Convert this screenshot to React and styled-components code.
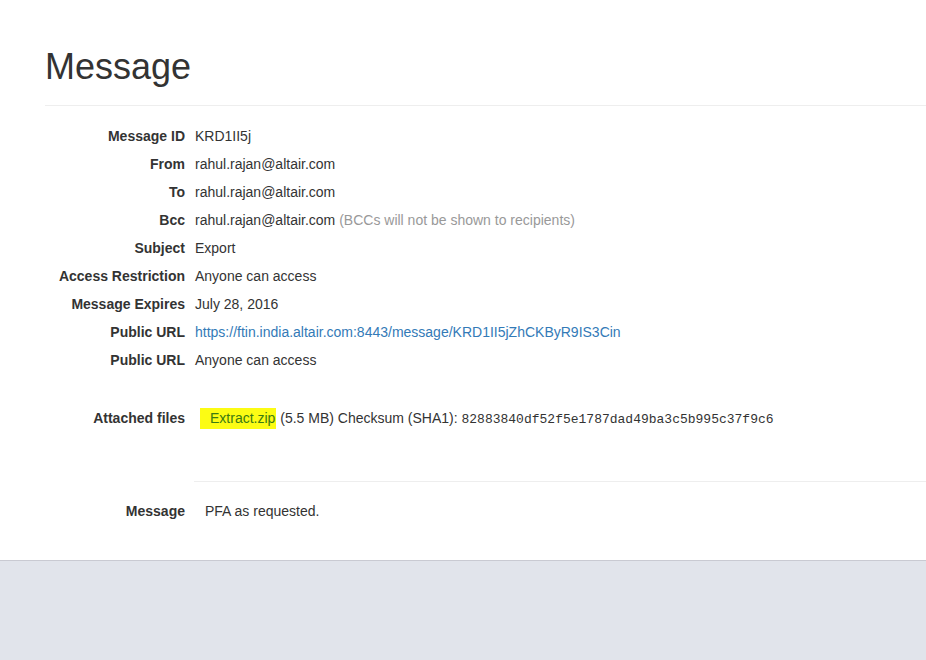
import React from 'react'
import styled, { createGlobalStyle } from 'styled-components'

const GlobalStyle = createGlobalStyle`
  html, body {
    margin: 0;
    padding: 0;
    background: #e1e4eb;
  }
  body {
    font-family: "Liberation Sans", Arial, Helvetica, sans-serif;
    font-size: 14px;
    color: #333;
  }
`

const fields = [
  { label: 'Message ID', value: 'KRD1II5j' },
  { label: 'From', value: 'rahul.rajan@altair.com' },
  { label: 'To', value: 'rahul.rajan@altair.com' },
  { label: 'Bcc', value: 'rahul.rajan@altair.com', note: '(BCCs will not be shown to recipients)' },
  { label: 'Subject', value: 'Export' },
  { label: 'Access Restriction', value: 'Anyone can access' },
  { label: 'Message Expires', value: 'July 28, 2016' },
  { label: 'Public URL', value: 'https://ftin.india.altair.com:8443/message/KRD1II5jZhCKByR9IS3Cin', link: true },
  { label: 'Public URL', value: 'Anyone can access' },
]

function App() {
  return (
    <>
      <GlobalStyle />
      <Page>
        <Header>
          <Title>Message</Title>
        </Header>
        <Details>
          {fields.map((f, i) => (
            <Row key={i}>
              <Label>{f.label}</Label>
              <Value>
                {f.link ? <Link href="#">{f.value}</Link> : f.value}
                {f.note && <Note> {f.note}</Note>}
              </Value>
            </Row>
          ))}
        </Details>
        <Attachments>
          <Label>Attached files</Label>
          <Value $indent>
            <Highlight>Extract.zip</Highlight> (5.5 MB) Checksum (SHA1):{' '}
            <Mono>82883840df52f5e1787dad49ba3c5b995c37f9c6</Mono>
          </Value>
        </Attachments>
        <Divider />
        <Body>
          <Label>Message</Label>
          <Value $indent>PFA as requested.</Value>
        </Body>
      </Page>
    </>
  )
}

export default App

const Page = styled.div`
  background: #fff;
  border-bottom: 1px solid #c9cad2;
  padding: 0 0 35px 45px;
`

const Header = styled.div`
  border-bottom: 1px solid #eee;
  padding-top: 47px;
  padding-bottom: 18px;
`

const Title = styled.h1`
  margin: 0;
  font-size: 36px;
  font-weight: 500;
  line-height: 40px;
  color: #333;
`

const Details = styled.div`
  padding-top: 16px;
`

const Row = styled.div`
  display: grid;
  grid-template-columns: 140px 1fr;
  column-gap: 10px;
  line-height: 28px;
`

const Label = styled.div`
  text-align: right;
  font-weight: bold;
  color: #333;
  white-space: nowrap;
`

const Value = styled.div`
  color: #333;
  white-space: nowrap;
  padding-left: ${p => (p.$indent ? '10px' : '0')};
`

const Note = styled.span`
  color: #999;
`

const Link = styled.a`
  color: #337ab7;
  text-decoration: none;
`

const Attachments = styled(Row)`
  margin-top: 30px;
`

const Highlight = styled.span`
  background: #fcfc14;
  color: #3b7a12;
  padding: 2px 1px 3px 10px;
  margin-left: -5px;
`

const Mono = styled.span`
  font-family: "Liberation Mono", "Courier New", monospace;
  font-size: 13px;
`

const Divider = styled.hr`
  border: 0;
  border-top: 1px solid #eee;
  margin: 47px 0 0 149px;
`

const Body = styled(Row)`
  margin-top: 15px;
`
